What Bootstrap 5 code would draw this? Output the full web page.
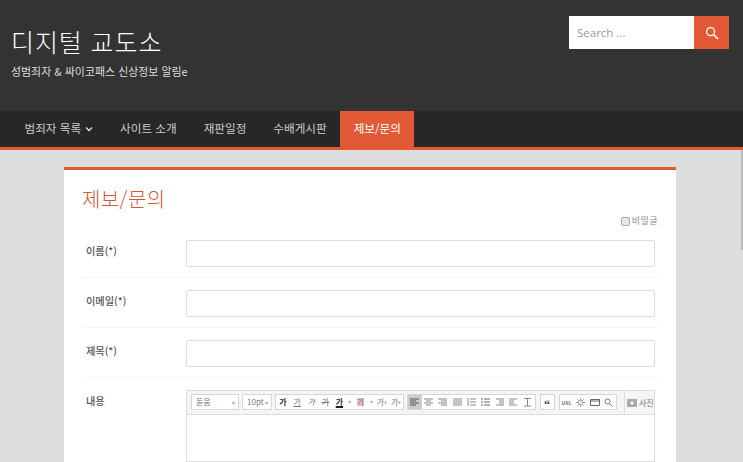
<!DOCTYPE html>
<html lang="ko">
<head>
<meta charset="utf-8">
<title>제보/문의</title>
<link href="https://cdn.jsdelivr.net/npm/bootstrap@5.3.0/dist/css/bootstrap.min.css" rel="stylesheet">
<style>
html,body{height:462px;overflow:hidden}
body{background:#ddd;font-family:"Open Sans","Noto Sans CJK KR",sans-serif;color:#444}
.site-top{background:#333;height:111px;padding:16px 14px 0 11px}
.site-name{font-size:25px;line-height:32px;font-weight:300;color:#fff;margin:9px 0 0;letter-spacing:.9px;font-family:"Noto Sans CJK KR",sans-serif}
.site-tag{font-size:10.950px;line-height:14px;color:#ddd;margin:7px 0 0;font-family:"Noto Sans CJK KR",sans-serif}
.search-box{width:160px;height:33px}
.search-in{flex:1;min-width:0;background:#fff;color:#999;font-size:11.500px;padding-left:8px;display:flex;align-items:center}
.search-btn{width:35px;background:#e25a35;display:flex;align-items:center;justify-content:center}
.main-nav{background:#272727;height:39px;border-bottom:3px solid #e25a35;padding-left:11px}
.main-nav a{color:#ccc;font-size:11.600px;padding:0 13.500px;height:36px;display:flex;align-items:center;text-decoration:none;font-family:"Noto Sans CJK KR",sans-serif}
.main-nav a.on{background:#e25a35;color:#fff}
.sheet{width:612px;margin:17px 0 0 64px;background:#fff;border-top:3px solid #e25a35;padding:15px 18px 0;height:295px}
.sheet-title{font-size:20px;line-height:28px;color:#d9552f;margin:0 0 1px;font-weight:300;letter-spacing:.4px;font-family:"Noto Sans CJK KR",sans-serif}
.secret{font-size:9px;color:#888;height:14px;letter-spacing:.5px;font-family:"Noto Sans CJK KR",sans-serif}
.secret i{display:block;width:9px;height:9px;border:1px solid #aaa;background:#e8e8e8;border-radius:2px;margin-right:2px}
.f-row{height:50px;border-bottom:1px solid #f6f6f6;padding-top:12px}
.f-row:last-child{border:0;height:84px}
.f-label{width:104px;padding:4px 0 0 4px;font-size:10.200px;line-height:14px;color:#555;font-weight:500;font-family:"Noto Sans CJK KR",sans-serif}
.f-box{flex:1;height:27px;border:1px solid #ddd;border-radius:2px;margin-right:3px}
.editor{flex:1;height:72px;border:1px solid #ddd;margin-right:3px}
.ed-bar{height:24px;background:#f5f5f5;border-bottom:1px solid #ddd;padding:3px 0 0 4px;font-size:8px;color:#777;font-family:"Noto Sans CJK KR",sans-serif;overflow:hidden}
.ed-grp{height:16px;background:#fff;border:1px solid #d6d6d6;display:flex;align-items:center;flex:none;margin-right:3px}
.ed-gap{margin-right:4px}
.ed-sel{justify-content:space-between;padding:0 3px 0 4px}
.ed-arrow{font-size:6px;color:#aaa}
.ed-font{width:48px}
.ed-size{width:30px}
.ed-i{width:14.100px;height:14px;flex:none;display:flex;align-items:center;justify-content:center;font-size:8px;line-height:1}
.ed-n{width:14px}
.ed-a{width:7px;font-size:6px;color:#aaa}
.ed-q{width:13px;font:700 12px/1 "Liberation Serif",serif;color:#444;padding-top:5px}
.ed-i.act{background:#ccc}
.ed-dark{color:#333}
.ed-ul{text-decoration:underline;text-decoration-color:#222;text-decoration-thickness:1.500px;font-weight:700}
.ed-red{background:#e8c4be}
.ed-mark{font-size:4px;line-height:1;vertical-align:baseline;position:static}
.ed-url{font-size:5px;font-weight:700}
.ed-photo{margin-left:auto;border-left:1px solid #ddd;height:24px;margin-top:-3px;padding:0 0 0 2px;display:flex;align-items:center;gap:2px;width:30px;flex:none;white-space:nowrap;overflow:hidden}
.scroll-thumb{position:absolute;top:150px;right:0;width:2px;height:100px;background:#bbb}
</style>
</head>
<body>
<header class="site-top d-flex justify-content-between align-items-start">
  <div>
    <h1 class="site-name">디지털 교도소</h1>
    <p class="site-tag">성범죄자 &amp; 싸이코패스 신상정보 알림e</p>
  </div>
  <div class="search-box d-flex">
    <div class="search-in">Search ...</div>
    <div class="search-btn"><svg width="14" height="14" viewBox="0 0 14 14" fill="none" stroke="#fff" stroke-width="1.300"><circle cx="5.600" cy="5.600" r="4"/><path d="M8.600 8.600 13 13" stroke-width="1.700"/></svg></div>
  </div>
</header>
<nav class="main-nav d-flex">
  <a href="#">범죄자 목록 <svg class="ms-1" width="8" height="6" viewBox="0 0 8 6" fill="none" stroke="#ddd" stroke-width="1.400"><path d="M1 1.500 4 4.500 7 1.500"/></svg></a>
  <a href="#">사이트 소개</a>
  <a href="#">재판일정</a>
  <a href="#">수배게시판</a>
  <a href="#" class="on">제보/문의</a>
</nav>
<main class="sheet">
  <h2 class="sheet-title">제보/문의</h2>
  <div class="secret d-flex justify-content-end align-items-center"><i></i>비밀글</div>
  <div class="f-row d-flex"><div class="f-label">이름(*)</div><div class="f-box"></div></div>
  <div class="f-row d-flex"><div class="f-label">이메일(*)</div><div class="f-box"></div></div>
  <div class="f-row d-flex"><div class="f-label">제목(*)</div><div class="f-box"></div></div>
  <div class="f-row d-flex"><div class="f-label">내용</div>
    <div class="editor">
      <div class="ed-bar d-flex">
        <div class="ed-grp ed-sel ed-font"><span>돋움</span><span class="ed-arrow">▾</span></div>
        <div class="ed-grp ed-sel ed-size"><span>10pt</span><span class="ed-arrow">▾</span></div>
        <div class="ed-grp">
          <span class="ed-i fw-bold ed-dark">가</span><span class="ed-i text-decoration-underline">가</span><span class="ed-i fst-italic">가</span><span class="ed-i text-decoration-line-through">가</span><span class="ed-i"><span class="ed-ul ed-dark">가</span></span><span class="ed-i ed-a">▾</span><span class="ed-i"><span class="ed-red">가</span></span><span class="ed-i ed-a">▾</span><span class="ed-i">가<sup class="ed-mark">a</sup></span><span class="ed-i">가<sub class="ed-mark">a</sub></span>
        </div>
        <div class="ed-grp ed-gap">
          <span class="ed-i act"><svg width="9" height="9" viewBox="0 0 9 9" stroke="#555"><path d="M0 1h9M0 3h6M0 5h9M0 7h6"/></svg></span>
          <span class="ed-i"><svg width="9" height="9" viewBox="0 0 9 9" stroke="#888"><path d="M0 1h9M2 3h5M0 5h9M2 7h5"/></svg></span>
          <span class="ed-i"><svg width="9" height="9" viewBox="0 0 9 9" stroke="#888"><path d="M0 1h9M3 3h6M0 5h9M3 7h6"/></svg></span>
          <span class="ed-i"><svg width="9" height="9" viewBox="0 0 9 9" stroke="#888"><path d="M0 1h9M0 3h9M0 5h9M0 7h9"/></svg></span>
          <span class="ed-i"><svg width="9" height="9" viewBox="0 0 9 9" stroke="#888"><path d="M3 1h6M3 4h6M3 7h6M1 0v8"/></svg></span>
          <span class="ed-i"><svg width="9" height="9" viewBox="0 0 9 9" stroke="#666"><path d="M3 1h6M3 4h6M3 7h6M0 1h2M0 4h2M0 7h2"/></svg></span>
          <span class="ed-i"><svg width="9" height="9" viewBox="0 0 9 9" stroke="#888"><path d="M1 1h8M4 3h5M4 5h5M1 7h8"/></svg></span>
          <span class="ed-i"><svg width="9" height="9" viewBox="0 0 9 9" stroke="#888"><path d="M0 1h8M0 3h5M0 5h5M0 7h8"/></svg></span>
          <span class="ed-i"><svg width="9" height="9" viewBox="0 0 9 9" stroke="#888"><path d="M1 .500h7M1 8h7M4.500 1v7"/></svg></span>
        </div>
        <div class="ed-grp ed-gap"><span class="ed-i ed-q">“</span></div>
        <div class="ed-grp">
          <span class="ed-i ed-n ed-url">URL</span>
          <span class="ed-i ed-n"><svg width="9" height="9" viewBox="0 0 9 9" fill="none" stroke="#999"><circle cx="4.500" cy="4.500" r="2"/><path d="M4.500 0v2M4.500 7v2M0 4.500h2M7 4.500h2M1.300 1.300l1.400 1.400M6.300 6.300l1.400 1.400M7.700 1.300 6.300 2.700M2.700 6.300 1.300 7.700"/></svg></span>
          <span class="ed-i ed-n"><svg width="10" height="9" viewBox="0 0 10 9" fill="none" stroke="#666"><path d="M.500 1.500h9v6h-9zM.500 3h9"/></svg></span>
          <span class="ed-i ed-n"><svg width="9" height="9" viewBox="0 0 9 9" fill="none" stroke="#777"><circle cx="3.500" cy="3.500" r="2.500"/><path d="M5.500 5.500 8.500 8.500"/></svg></span>
        </div>
        <div class="ed-photo"><svg width="10" height="8" viewBox="0 0 10 8"><rect width="10" height="8" fill="#aaa"/><circle cx="5" cy="4" r="1.500" fill="#fff"/></svg><span>사진</span></div>
      </div>
    </div>
  </div>
</main>
<div class="scroll-thumb"></div>
</body>
</html>
